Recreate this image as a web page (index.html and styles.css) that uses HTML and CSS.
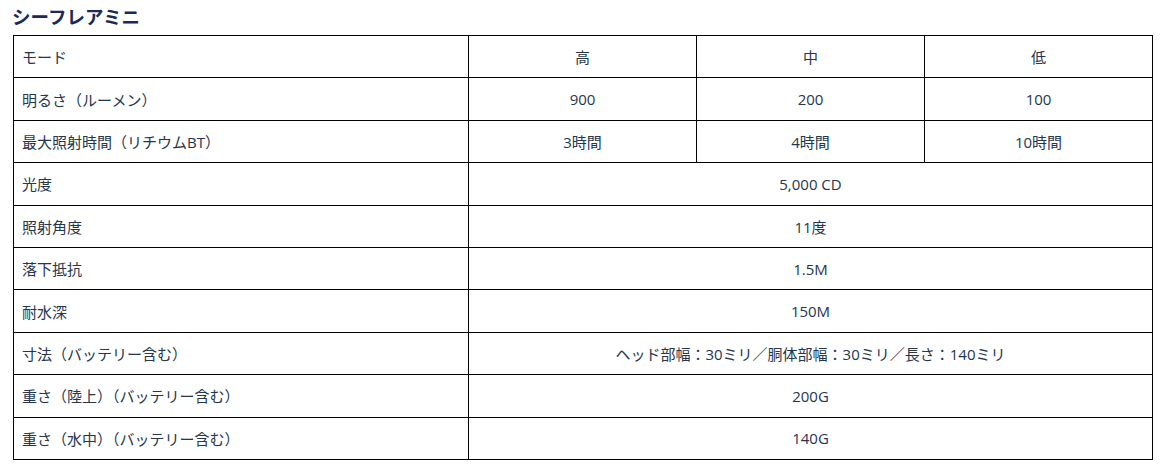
FILE: index.html
```html
<!DOCTYPE html>
<html lang="ja">
<head>
<meta charset="utf-8">
<title>シーフレアミニ</title>
<link rel="stylesheet" href="styles.css">
</head>
<body>
<div class="page">
  <h2 class="title">シーフレアミニ</h2>
  <table class="spec">
    <colgroup>
      <col class="c-label">
      <col class="c-val">
      <col class="c-val">
      <col class="c-val">
    </colgroup>
    <tbody>
      <tr><td class="label">モード</td><td>高</td><td>中</td><td>低</td></tr>
      <tr><td class="label">明るさ（ルーメン）</td><td>900</td><td>200</td><td>100</td></tr>
      <tr><td class="label">最大照射時間（リチウムBT）</td><td>3時間</td><td>4時間</td><td>10時間</td></tr>
      <tr><td class="label">光度</td><td colspan="3">5,000 CD</td></tr>
      <tr><td class="label">照射角度</td><td colspan="3">11度</td></tr>
      <tr><td class="label">落下抵抗</td><td colspan="3">1.5M</td></tr>
      <tr><td class="label">耐水深</td><td colspan="3">150M</td></tr>
      <tr><td class="label">寸法（バッテリー含む）</td><td colspan="3">ヘッド部幅：30ミリ／胴体部幅：30ミリ／長さ：140ミリ</td></tr>
      <tr><td class="label">重さ（陸上）（バッテリー含む）</td><td colspan="3">200G</td></tr>
      <tr><td class="label">重さ（水中）（バッテリー含む）</td><td colspan="3">140G</td></tr>
    </tbody>
  </table>
</div>
</body>
</html>
```

FILE: styles.css
```css
html, body {
  margin: 0;
  padding: 0;
  background: #ffffff;
}

.page {
  padding: 4px 10px 0 13px;
  font-family: "Open Sans", "Noto Sans CJK JP", sans-serif;
  color: #25364d;
}

.title {
  margin: 0 0 7px -1px;
  font-family: "Noto Sans CJK JP", sans-serif;
  font-size: 18.5px;
  font-weight: 700;
  line-height: 24px;
  color: #1b2a57;
}

.spec {
  width: 1140px;
  border-collapse: collapse;
  table-layout: fixed;
  font-size: 15px;
}

.c-label { width: 455px; }
.c-val { width: 228px; }

.spec td {
  border: 1.5px solid #000;
  height: 42.4px;
  padding: 0 8px;
  box-sizing: border-box;
  text-align: center;
  vertical-align: middle;
  font-family: "Open Sans", "Noto Sans CJK JP", sans-serif;
}

.spec td.label {
  text-align: left;
}
```
